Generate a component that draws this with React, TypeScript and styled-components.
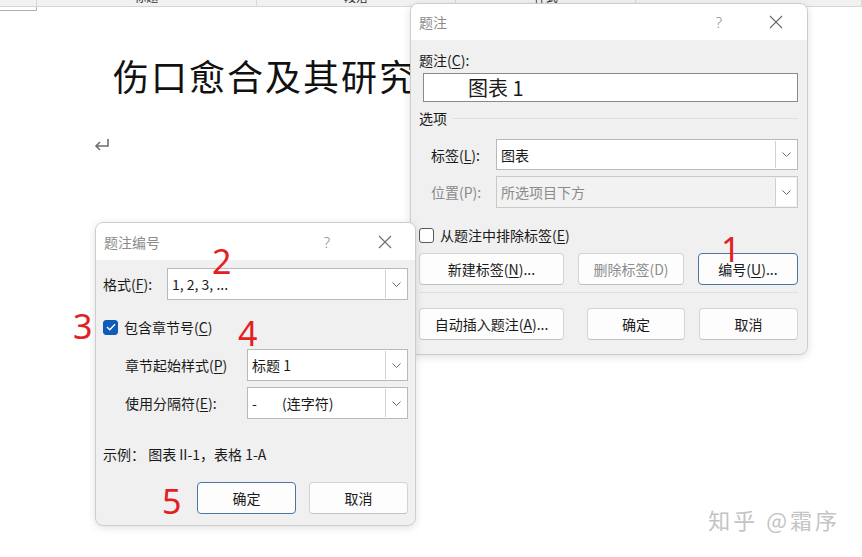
import React from 'react';
import styled, { createGlobalStyle } from 'styled-components';

const GlobalStyle = createGlobalStyle`
  html, body {
    margin: 0;
    padding: 0;
    background: #ffffff;
  }
  body {
    font-family: "Noto Sans CJK SC", "Noto Sans", sans-serif;
    color: #1a1a1a;
  }
`;

const Desktop = styled.div`
  position: relative;
  width: 862px;
  height: 557px;
  overflow: hidden;
  background: #ffffff;
`;

const Ribbon = styled.div`
  height: 6px;
  overflow: hidden;
  background: #f1f1f1;
  border-bottom: 1px solid #d6d6d6;
  display: flex;
`;

const RibbonCell = styled.div<{ $width: number }>`
  width: ${p => p.$width}px;
  border-right: 1px solid #d8d8d8;
  display: flex;
  justify-content: center;
  font-size: 12px;
  line-height: 12px;
  margin-top: -9px;
  color: #333;
`;

const CropMark = styled.div`
  width: 36px;
  height: 3px;
  border-right: 1px solid #b0b0b0;
  border-bottom: 1px solid #b0b0b0;
`;

const Page = styled.div`
  padding: 38px 0 0 113px;
`;

const DocTitle = styled.h1`
  margin: 0;
  font-family: "Noto Sans CJK SC", serif;
  font-size: 36px;
  font-weight: 400;
  letter-spacing: 2px;
  line-height: 52px;
  color: #111;
`;

const ReturnMark = styled.div`
  margin: 33px 0 0 -20px;
  width: 18px;
  height: 16px;
`;

const Window = styled.div<{ $left: number; $top: number; $width: number; $height: number; $z: number }>`
  position: absolute;
  left: ${p => p.$left}px;
  top: ${p => p.$top}px;
  width: ${p => p.$width}px;
  height: ${p => p.$height}px;
  z-index: ${p => p.$z};
  box-sizing: border-box;
  border: 1px solid #cdcdcd;
  border-radius: 8px;
  background: #f0f0f0;
  box-shadow: 0 2px 8px rgba(0, 0, 0, 0.12);
  overflow: hidden;
  display: flex;
  flex-direction: column;
  font-size: 14px;
`;

const TitleBar = styled.div<{ $height: number }>`
  height: ${p => p.$height}px;
  flex: none;
  background: #ffffff;
  display: flex;
  align-items: center;
  padding-left: 8px;
  color: #8c8c8c;
  font-size: 14px;
`;

const TitleText = styled.div`
  flex: 1;
`;

const TitleButton = styled.div<{ $gap: number }>`
  width: 46px;
  height: 100%;
  margin-right: ${p => p.$gap}px;
  display: flex;
  align-items: center;
  justify-content: center;
  color: #8a8a8a;
  font-family: "Noto Sans", sans-serif;
  font-size: 15px;
  font-weight: 300;
`;

const Body = styled.div<{ $pad: string }>`
  padding: ${p => p.$pad};
  display: flex;
  flex-direction: column;
`;

const Label = styled.div<{ $muted?: boolean }>`
  height: 18px;
  line-height: 18px;
  white-space: pre;
  color: ${p => (p.$muted ? '#8a8a8a' : '#1a1a1a')};
`;

const CaptionInput = styled.div`
  margin: 4px 0 0 4px;
  height: 29px;
  box-sizing: border-box;
  border: 1px solid #8a8a8a;
  background: #ffffff;
  padding-left: 44px;
  display: flex;
  align-items: center;
  font-size: 20px;
  color: #1a1a1a;
`;

const GroupHeader = styled.div`
  margin-top: 7px;
  display: flex;
  align-items: center;
  gap: 6px;
`;

const Rule = styled.div`
  flex: 1;
  height: 1px;
  background: #dedede;
`;

const FieldGrid = styled.div<{ $cols: string; $indent: number; $mt: number }>`
  margin-top: ${p => p.$mt}px;
  padding-left: ${p => p.$indent}px;
  display: grid;
  grid-template-columns: ${p => p.$cols};
  row-gap: 6px;
  align-items: center;
`;

const Combo = styled.div<{ $h: number; $disabled?: boolean }>`
  height: ${p => p.$h}px;
  box-sizing: border-box;
  border: 1px solid ${p => (p.$disabled ? '#c9c9c9' : '#b9b9b9')};
  background: ${p => (p.$disabled ? '#f2f2f2' : '#ffffff')};
  color: ${p => (p.$disabled ? '#8a8a8a' : '#1a1a1a')};
  display: flex;
  align-items: stretch;
`;

const ComboValue = styled.div`
  flex: 1;
  padding-left: 4px;
  display: flex;
  align-items: center;
  white-space: pre;
`;

const ComboArrow = styled.div`
  width: 20px;
  margin: 1px;
  border-left: 1px solid #cfcfcf;
  background: #ffffff;
  display: flex;
  align-items: center;
  justify-content: center;
`;

const CheckRow = styled.div<{ $mt: number }>`
  margin-top: ${p => p.$mt}px;
  height: 16px;
  display: flex;
  align-items: center;
  gap: 6px;
`;

const Box = styled.div<{ $checked?: boolean }>`
  width: 15px;
  height: 15px;
  box-sizing: border-box;
  border-radius: 3px;
  border: 1px solid ${p => (p.$checked ? '#0f5cb7' : '#5a5a5a')};
  background: ${p => (p.$checked ? '#0f5cb7' : '#ffffff')};
  display: flex;
  align-items: center;
  justify-content: center;
`;

const ButtonRow = styled.div<{ $mt: number; $justify: string; $gap?: number }>`
  margin-top: ${p => p.$mt}px;
  display: flex;
  justify-content: ${p => p.$justify};
  gap: ${p => p.$gap ?? 0}px;
`;

const Button = styled.div<{ $w: number; $ml?: number; $focus?: boolean; $disabled?: boolean }>`
  width: ${p => p.$w}px;
  margin-left: ${p => p.$ml ?? 0}px;
  height: 32px;
  box-sizing: border-box;
  border-radius: 4px;
  border: 1px solid ${p => (p.$focus ? '#4a76a0' : '#d3d3d3')};
  border-bottom-color: ${p => (p.$focus ? '#4a76a0' : '#c2c2c2')};
  background: #fdfdfd;
  color: ${p => (p.$disabled ? '#8c8c8c' : '#1a1a1a')};
  display: flex;
  align-items: center;
  justify-content: center;
  white-space: pre;
`;

const Separator = styled.div`
  margin-top: 7px;
  height: 1px;
  background: #e0e0e0;
`;

const Example = styled.div`
  margin-top: 26px;
  height: 18px;
  line-height: 18px;
`;

const Mark = styled.div<{ $x: number; $y: number }>`
  position: absolute;
  left: ${p => p.$x}px;
  top: ${p => p.$y}px;
  z-index: 5;
  font-family: "Noto Sans", sans-serif;
  font-size: 34px;
  line-height: 34px;
  color: #e3201f;
`;

const Watermark = styled.div`
  position: absolute;
  right: 22px;
  bottom: 22px;
  font-size: 22px;
  letter-spacing: 3px;
  color: #c4c4c4;
`;

const Chevron = () => (
  <svg width="9" height="5" viewBox="0 0 9 5">
    <path d="M0.5 0.5 L4.5 4.5 L8.5 0.5" fill="none" stroke="#6a6a6a" strokeWidth="1" />
  </svg>
);

const CloseIcon = () => (
  <svg width="14" height="14" viewBox="0 0 14 14">
    <path d="M1 1 L13 13 M13 1 L1 13" stroke="#6a6a6a" strokeWidth="1.1" />
  </svg>
);

const CheckIcon = () => (
  <svg width="10" height="8" viewBox="0 0 10 8">
    <path d="M1 4 L3.8 6.8 L9 1.2" fill="none" stroke="#ffffff" strokeWidth="1.3" />
  </svg>
);

const Key = ({ k }: { k: string }) => <u style={{ textUnderlineOffset: 2 }}>{k}</u>;

const ComboBox: React.FC<{ value: string; h: number; disabled?: boolean }> = ({ value, h, disabled }) => (
  <Combo $h={h} $disabled={disabled}>
    <ComboValue>{value}</ComboValue>
    <ComboArrow>
      <Chevron />
    </ComboArrow>
  </Combo>
);

const App: React.FC = () => {
  return (
    <Desktop>
      <GlobalStyle />
      <Ribbon>
        <RibbonCell $width={36}>&nbsp;</RibbonCell>
        <RibbonCell $width={220}>标题</RibbonCell>
        <RibbonCell $width={200}>段落</RibbonCell>
        <RibbonCell $width={180}>样式</RibbonCell>
        <RibbonCell $width={226}>&nbsp;</RibbonCell>
      </Ribbon>
      <CropMark />
      <Page>
        <DocTitle>伤口愈合及其研究</DocTitle>
        <ReturnMark>
          <svg width="18" height="16" viewBox="0 0 18 16">
            <path d="M15 2 V9 H3 M7 5 L3 9 L7 13" fill="none" stroke="#6e6e6e" strokeWidth="1.6" />
          </svg>
        </ReturnMark>
      </Page>

      <Window $left={410} $top={3} $width={398} $height={352} $z={1}>
        <TitleBar $height={36}>
          <TitleText>题注</TitleText>
          <TitleButton $gap={11}>?</TitleButton>
          <TitleButton $gap={8}>
            <CloseIcon />
          </TitleButton>
        </TitleBar>
        <Body $pad="11px 9px 0 8px">
          <Label>
            题注(<Key k="C" />):
          </Label>
          <CaptionInput>图表 1</CaptionInput>
          <GroupHeader>
            <Label>选项</Label>
            <Rule />
          </GroupHeader>
          <FieldGrid $cols="65px 1fr" $indent={12} $mt={12}>
            <Label>
              标签(<Key k="L" />):
            </Label>
            <ComboBox value="图表" h={31} />
            <Label $muted>位置(P):</Label>
            <ComboBox value="所选项目下方" h={32} disabled />
          </FieldGrid>
          <CheckRow $mt={19}>
            <Box />
            <Label>
              从题注中排除标签(<Key k="E" />)
            </Label>
          </CheckRow>
          <ButtonRow $mt={10} $justify="space-between">
            <Button $w={145}>
              新建标签(<Key k="N" />)...
            </Button>
            <Button $w={106} $disabled>
              删除标签(D)
            </Button>
            <Button $w={100} $focus>
              编号(<Key k="U" />)...
            </Button>
          </ButtonRow>
          <Separator />
          <ButtonRow $mt={15} $justify="flex-start">
            <Button $w={145}>
              自动插入题注(<Key k="A" />)...
            </Button>
            <Button $w={98} $ml={23}>
              确定
            </Button>
            <Button $w={99} $ml={14}>
              取消
            </Button>
          </ButtonRow>
        </Body>
      </Window>

      <Window $left={95} $top={222} $width={321} $height={304} $z={2}>
        <TitleBar $height={37}>
          <TitleText>题注编号</TitleText>
          <TitleButton $gap={12}>?</TitleButton>
          <TitleButton $gap={7}>
            <CloseIcon />
          </TitleButton>
        </TitleBar>
        <Body $pad="8px 7px 0 7px">
          <FieldGrid $cols="64px 1fr" $indent={0} $mt={0}>
            <Label>
              格式(<Key k="F" />):
            </Label>
            <ComboBox value="1, 2, 3, ..." h={32} />
          </FieldGrid>
          <CheckRow $mt={19}>
            <Box $checked>
              <CheckIcon />
            </Box>
            <Label>
              包含章节号(<Key k="C" />)
            </Label>
          </CheckRow>
          <FieldGrid $cols="122px 1fr" $indent={22} $mt={14}>
            <Label>
              章节起始样式(<Key k="P" />)
            </Label>
            <ComboBox value="标题 1" h={32} />
            <Label>
              使用分隔符(<Key k="E" />):
            </Label>
            <ComboBox value="-        (连字符)" h={32} />
          </FieldGrid>
          <Example>示例： 图表 II-1，表格 1-A</Example>
          <ButtonRow $mt={19} $justify="flex-end" $gap={13}>
            <Button $w={99} $focus>
              确定
            </Button>
            <Button $w={99}>取消</Button>
          </ButtonRow>
        </Body>
      </Window>

      <Mark $x={721} $y={232}>1</Mark>
      <Mark $x={212} $y={244}>2</Mark>
      <Mark $x={73} $y={309}>3</Mark>
      <Mark $x={238} $y={316}>4</Mark>
      <Mark $x={162} $y={484}>5</Mark>

      <Watermark>知乎 @霜序</Watermark>
    </Desktop>
  );
};

export default App;
